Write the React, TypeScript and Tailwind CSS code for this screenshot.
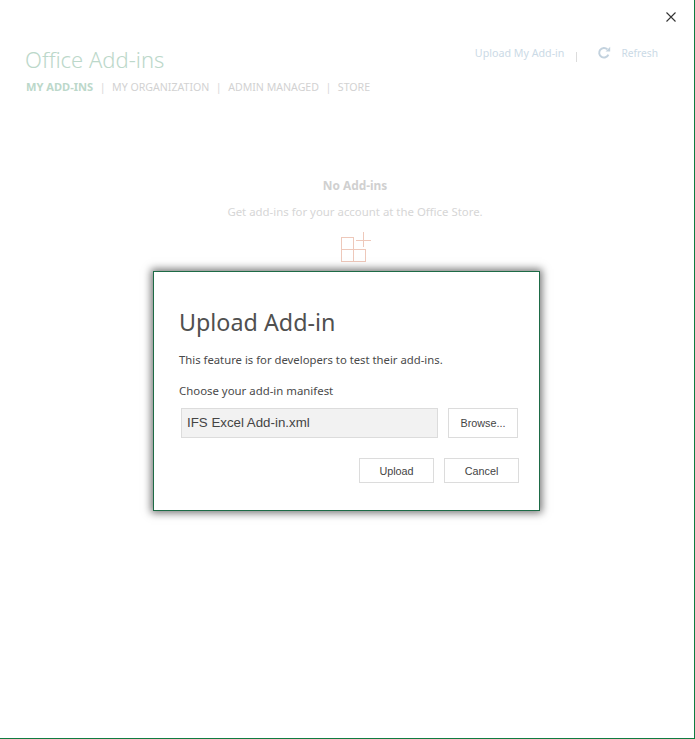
const noto = "font-['Noto_Sans',sans-serif]";
const arial = "font-['Liberation_Sans',sans-serif]";

function PlusGrid() {
  return (
    <svg width="32" height="31" viewBox="0 0 32 31" fill="none" stroke="#eec8ba" strokeWidth="1" shapeRendering="crispEdges">
      <path d="M0.5 5.5h12v24h-12zM0.5 17.5h24v12h-12M15 8.5h15M22.5 0v15" />
    </svg>
  );
}

function RefreshIcon() {
  return (
    <svg width="14" height="14" viewBox="0 0 14 14" fill="none">
      <path d="M11.4 8.6A4.8 4.8 0 1 1 10.4 3.4" stroke="#c3d2de" strokeWidth="2" />
      <path d="M8.6 5.4h4.6V0.8z" fill="#c3d2de" />
    </svg>
  );
}

function Tab({ label, active }: { label: string; active?: boolean }) {
  return (
    <span className={active ? "text-[11.1px] font-bold text-[#bcd8ca]" : "text-[#d2d2d2]"}>{label}</span>
  );
}

function Sep() {
  return <span className="mx-[6.5px] text-[#d8d8d8]">|</span>;
}

export default function App() {
  return (
    <div className={`relative h-[739px] w-[695px] overflow-hidden bg-white border-r border-b border-[#107c41] ${noto}`}>
      <div className="flex justify-end pt-[11px] pr-[17px]">
        <svg width="12" height="12" viewBox="0 0 12 12" stroke="#333" strokeWidth="1.1">
          <path d="M1.5 1.5l9 9M10.5 1.5l-9 9" />
        </svg>
      </div>

      <div className="flex items-start justify-between pl-[25px] pr-[36px] pt-[21px]">
        <div>
          <h1 className="text-[22px] leading-[30px] font-light text-[#bcd8ca]">Office Add-ins</h1>
          <div className="mt-[6px] flex pl-px text-[10.6px] leading-[14px]">
            <Tab label="MY ADD-INS" active />
            <Sep />
            <Tab label="MY ORGANIZATION" />
            <Sep />
            <Tab label="ADMIN MANAGED" />
            <Sep />
            <Tab label="STORE" />
          </div>
        </div>
        <div className="flex items-center text-[10.7px] leading-[14px] text-[#cbdae6]">
          <span>Upload My Add-in</span>
          <span className="ml-[12px] mt-[8px] h-[10px] w-px bg-[#dcdcdc]" />
          <span className="ml-[20px]"><RefreshIcon /></span>
          <span className="ml-[10px] text-[10.2px]">Refresh</span>
        </div>
      </div>

      <div className="mt-[83px] flex flex-col items-center pl-[16px]">
        <p className="text-[11.9px] leading-[16px] font-bold text-[#d0d0d0]">No Add-ins</p>
        <p className="mt-[11px] text-[11.4px] leading-[16px] text-[#d6d6d6]">Get add-ins for your account at the Office Store.</p>
        <div className="mt-[12px] ml-[4px]"><PlusGrid /></div>
      </div>

      <div className="absolute left-[153px] top-[271px] h-[240px] w-[387px] border border-[#1d6b46] bg-white pl-[25px] pr-[20px] pt-[34px] shadow-[0_0_8px_2px_rgba(0,0,0,0.55)]">
        <h2 className="text-[23.3px] leading-[32px] text-[#505050]">Upload Add-in</h2>
        <p className="mt-[14px] text-[11.3px] leading-[16px] text-[#4a4a4a]">This feature is for developers to test their add-ins.</p>
        <p className="mt-[15px] text-[11.4px] leading-[16px] text-[#4a4a4a]">Choose your add-in manifest</p>
        <div className="mt-[9px] flex pl-[2px]">
          <div className={`flex h-[30px] w-[257px] shrink-0 items-center border border-[#dcdcdc] bg-[#f2f2f2] px-[5px] text-[13.3px] text-[#444] ${arial}`}>IFS Excel Add-in.xml</div>
          <button className={`ml-[10px] h-[30px] w-[70px] shrink-0 border border-[#dcdcdc] bg-white pt-[1px] text-[10.8px] text-[#444] ${arial}`}>Browse...</button>
        </div>
        <div className="mt-[20px] flex justify-end gap-[10px]">
          <button className={`h-[25px] w-[75px] border border-[#dcdcdc] bg-white pt-[1px] text-[10.8px] text-[#444] ${arial}`}>Upload</button>
          <button className={`h-[25px] w-[75px] border border-[#dcdcdc] bg-white pt-[1px] text-[10.8px] text-[#444] ${arial}`}>Cancel</button>
        </div>
      </div>
    </div>
  );
}
